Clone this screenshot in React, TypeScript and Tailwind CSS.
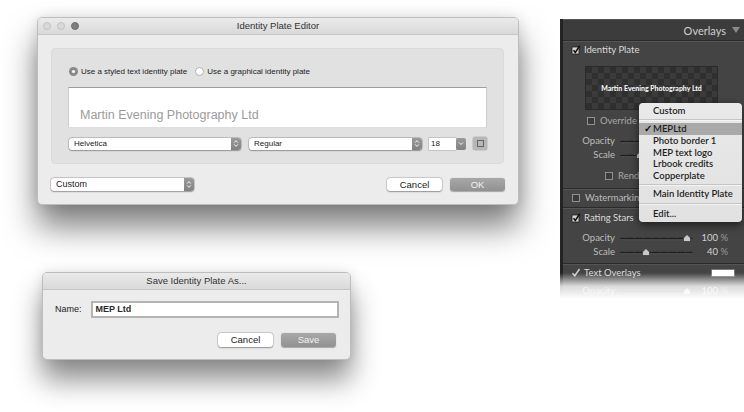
import React from "react";

const SF = "font-['Liberation_Sans',Arial,sans-serif]";
const LR = "font-['Lato','Liberation_Sans',sans-serif]";

function UpDown() {
  return (
    <div className="flex w-[10px] items-center justify-center rounded-r-[3px] bg-linear-to-b from-[#9a9a9a] to-[#828282]">
      <svg width="6" height="9" viewBox="0 0 6 9">
        <path d="M1.2 3.6 3 1.6 4.8 3.6M1.2 5.4 3 7.4 4.8 5.4" stroke="white" strokeWidth="0.9" fill="none" />
      </svg>
    </div>
  );
}

function Select({ label, className, textClass }: { label: string; className: string; textClass: string }) {
  return (
    <div className={`flex items-stretch rounded-[3px] bg-white shadow-[0_0_0_0.5px_rgba(0,0,0,0.25),0_0.5px_1.5px_rgba(0,0,0,0.25)] ${className}`}>
      <div className={`flex flex-1 items-center pl-[5px] leading-none text-[#222] ${textClass}`}>{label}</div>
      <UpDown />
    </div>
  );
}

function MacButton({ label, primary, className }: { label: string; primary?: boolean; className: string }) {
  return primary ? (
    <div className={`flex items-center justify-center rounded-[3px] bg-linear-to-b from-[#a8a8a8] to-[#919191] text-[9.5px] leading-none text-[#f2f2f2] shadow-[0_0.5px_1px_rgba(0,0,0,0.3)] ${className}`}>
      {label}
    </div>
  ) : (
    <div className={`flex items-center justify-center rounded-[3px] bg-white text-[9.5px] leading-none text-[#222] shadow-[0_0_0_0.5px_rgba(0,0,0,0.2),0_0.5px_1.5px_rgba(0,0,0,0.3)] ${className}`}>
      {label}
    </div>
  );
}

function TitleBar({ title, lights }: { title: string; lights?: boolean }) {
  return (
    <div className="relative flex h-[17px] items-center justify-center border-b border-[#c6c6c6] bg-linear-to-b from-[#ebebeb] to-[#d9d9d9]">
      {lights && (
        <div className="absolute left-[5px] top-[4px] flex gap-[6px]">
          <div className="h-[8px] w-[8px] rounded-full border border-[#c2c2c2] bg-[#d9d9d9]" />
          <div className="h-[8px] w-[8px] rounded-full border border-[#c2c2c2] bg-[#d9d9d9]" />
          <div className="h-[8px] w-[8px] rounded-full border border-[#707070] bg-[#7e7e7e]" />
        </div>
      )}
      <span className="text-[9.5px] leading-none text-[#333]">{title}</span>
    </div>
  );
}

function LRCheck({ checked }: { checked?: boolean }) {
  return checked ? (
    <svg width="10" height="10" viewBox="0 0 10 10" className="shrink-0">
      <rect x="1" y="2" width="7" height="7" fill="#d6d6d6" stroke="#1e1e1e" strokeWidth="0.8" />
      <path d="M2.5 5.2 4.3 7.4 8.8 0.8" stroke="#111" strokeWidth="1.6" fill="none" />
    </svg>
  ) : (
    <svg width="10" height="10" viewBox="0 0 10 10" className="shrink-0">
      <rect x="1.5" y="1.5" width="7" height="7" fill="#3a3a3a" stroke="#9a9a9a" strokeWidth="0.9" />
    </svg>
  );
}

function Slider({ width, thumb }: { width: number; thumb: number }) {
  const ticks = [];
  for (let x = 6; x < width - 3; x += 8.5) ticks.push(x);
  return (
    <svg width={width} height="10" viewBox={`0 0 ${width} 10`} className="shrink-0">
      <line x1="1" y1="5.5" x2={width - 1} y2="5.5" stroke="#1f1f1f" strokeWidth="1.4" strokeLinecap="round" />
      <line x1="1" y1="6.8" x2={width - 1} y2="6.8" stroke="#5e5e5e" strokeWidth="0.6" />
      {ticks.map((t) => (
        <line key={t} x1={t} y1="4" x2={t} y2="5" stroke="#6a6a6a" strokeWidth="0.6" />
      ))}
      <path d={`M${thumb - 3.5} 8.5 L${thumb - 3.5} 5 L${thumb} 1.5 L${thumb + 3.5} 5 L${thumb + 3.5} 8.5 Z`} fill="#c9c9c9" stroke="#222" strokeWidth="0.6" />
    </svg>
  );
}

function Separator() {
  return (
    <div className="flex flex-col">
      <div className="h-px bg-[#2a2a2a]" />
      <div className="h-px bg-[#555]" />
    </div>
  );
}

function SliderRow({ label, width, thumb, value, className }: { label: string; width: number; thumb: number; value?: string; className: string }) {
  return (
    <div className={`flex items-center leading-none ${className}`}>
      <div className="w-[52px] text-right text-[#bdbdbd]">{label}</div>
      <div className="ml-[5px] flex">
        <Slider width={width} thumb={thumb} />
      </div>
      {value && (
        <div className="ml-auto mr-[16px] text-[#d2d2d2]">
          {value} <span className="text-[#9a9a9a]">%</span>
        </div>
      )}
    </div>
  );
}

function MenuItem({ label, checked, className }: { label: string; checked?: boolean; className: string }) {
  return (
    <div className={`flex items-center leading-none ${checked ? "bg-[#a9a9a9]" : ""} ${className}`}>
      <span className="w-[14px] pl-[5px] text-[#111]">{checked ? "✓" : ""}</span>
      <span>{label}</span>
    </div>
  );
}

function MenuSep({ className }: { className: string }) {
  return (
    <div className={`flex flex-col justify-center ${className}`}>
      <div className="h-px bg-[#c4c4c4]" />
      <div className="h-px bg-[#f4f4f4]" />
    </div>
  );
}

export default function App() {
  return (
    <div className={`relative h-[412px] w-[744px] overflow-hidden bg-white ${SF}`}>
      {/* Identity Plate Editor */}
      <div className="absolute left-[37px] top-[17px] flex h-[188px] w-[482px] flex-col overflow-hidden rounded-[5px] border border-[#bdbdbd] bg-[#ececec] shadow-[0_22px_32px_rgba(0,0,0,0.5),0_0_14px_rgba(0,0,0,0.12)]">
        <TitleBar title="Identity Plate Editor" lights />
        <div className="ml-[13px] mt-[13px] flex h-[116px] w-[453px] flex-col rounded-[4px] border border-[#dadada] bg-[#e1e1e1] px-[16px]">
          <div className="mt-[18px] flex items-center text-[8px] leading-none text-[#222]">
            <div className="ml-[1px] flex h-[9px] w-[9px] items-center justify-center rounded-full bg-[#8a8a8a]">
              <div className="h-[3px] w-[3px] rounded-full bg-white" />
            </div>
            <span className="ml-[3px]">Use a styled text identity plate</span>
            <div className="ml-[8px] h-[9px] w-[9px] rounded-full border border-[#b2b2b2] bg-white" />
            <span className="ml-[3px]">Use a graphical identity plate</span>
          </div>
          <div className="mt-[11px] flex h-[41px] w-[419px] items-center border-x border-b border-t border-x-[#cdcdcd] border-b-[#dedede] border-t-[#9e9e9e] bg-white pl-[11px] pt-[16px]">
            <span className="text-[12.5px] leading-none text-[#9b9b9b]">Martin Evening Photography Ltd</span>
          </div>
          <div className="mt-[9px] flex items-center">
            <Select label="Helvetica" className="ml-[1px] h-[12px] w-[172px]" textClass="text-[8px]" />
            <Select label="Regular" className="ml-[8px] h-[12px] w-[173px]" textClass="text-[8px]" />
            <div className="ml-[7px] flex h-[12px] w-[37px] items-stretch">
              <div className="flex flex-1 items-center bg-white pl-[2px] text-[8px] leading-none text-[#222] shadow-[0_0_0_0.5px_rgba(0,0,0,0.25)]">18</div>
              <div className="flex w-[10px] items-center justify-center rounded-[2px] bg-linear-to-b from-[#9a9a9a] to-[#828282]">
                <svg width="6" height="5" viewBox="0 0 6 5">
                  <path d="M1 1.5 3 3.5 5 1.5" stroke="white" strokeWidth="0.9" fill="none" />
                </svg>
              </div>
            </div>
            <div className="ml-[7px] flex h-[13px] w-[14px] items-center justify-center rounded-[2px] bg-[#b7b7b7] shadow-[0_0_0_0.5px_rgba(0,0,0,0.2)]">
              <div className="h-[7px] w-[7px] border border-[#666]" />
            </div>
          </div>
        </div>
        <div className="mx-[13px] mt-[14px] flex items-center">
          <Select label="Custom" className="h-[13px] w-[143px]" textClass="text-[9px]" />
          <MacButton label="Cancel" className="ml-auto h-[13px] w-[55px]" />
          <MacButton label="OK" primary className="ml-[8px] h-[13px] w-[55px]" />
        </div>
      </div>

      {/* Save Identity Plate As */}
      <div className="absolute left-[42px] top-[272px] flex h-[88px] w-[309px] flex-col overflow-hidden rounded-[5px] border border-[#bdbdbd] bg-[#ececec] shadow-[0_20px_28px_rgba(0,0,0,0.45),0_0_12px_rgba(0,0,0,0.1)]">
        <TitleBar title="Save Identity Plate As..." />
        <div className="ml-[12px] mt-[11px] flex items-center">
          <span className="text-[9px] text-[#222]">Name:</span>
          <div className="ml-[9px] flex h-[17px] w-[248px] items-center border-2 border-[#b4b4b4] bg-white pl-[3px]">
            <span className="text-[9px] font-bold leading-none text-[#2a2a2a]">MEP Ltd</span>
          </div>
        </div>
        <div className="mr-[14px] mt-[15px] flex justify-end">
          <MacButton label="Cancel" className="h-[14px] w-[55px]" />
          <MacButton label="Save" primary className="ml-[8px] h-[14px] w-[55px]" />
        </div>
      </div>

      {/* Lightroom Overlays panel */}
      <div className={`absolute left-[560px] top-[19px] h-[280px] w-[184px] overflow-hidden bg-[#242424] pl-[3px] ${LR}`}>
        <div className="flex h-full flex-col bg-[#444] text-[9.5px] leading-none">
          <div className="flex h-[21px] shrink-0 items-center justify-end border-t border-[#575757] bg-[#3c3c3c] pr-[3px]">
            <span className="text-[11px] text-[#cfcfcf]">Overlays</span>
            <svg width="10" height="8" viewBox="0 0 10 8" className="ml-[5px]">
              <path d="M1 1 H9 L5 7 Z" fill="#8a8a8a" />
            </svg>
          </div>
          <Separator />
          <div className="mt-[1px] flex h-[13px] shrink-0 items-center pl-[8px]">
            <LRCheck checked />
            <span className="ml-[3px] text-[#dadada]">Identity Plate</span>
          </div>
          <div className="ml-[22px] mt-[10px] flex h-[44px] w-[133px] shrink-0 items-center justify-center border border-[#2a2a2a] bg-[conic-gradient(#3b3b3b_25%,#2f2f2f_0_50%,#3b3b3b_0_75%,#2f2f2f_0)] bg-[length:12px_12px]">
            <span className="text-[7px] font-bold text-white">Martin Evening Photography Ltd</span>
          </div>
          <div className="mt-[4px] flex h-[14px] shrink-0 items-center pl-[23px]">
            <LRCheck />
            <span className="ml-[4px] text-[#a8a8a8]">Override Color</span>
          </div>
          <div className="mt-[6px]" />
          <SliderRow label="Opacity" width={80} thumb={74} className="h-[14px] shrink-0" />
          <SliderRow label="Scale" width={80} thumb={20} className="h-[14px] shrink-0" />
          <div className="mt-[7px] flex h-[14px] shrink-0 items-center pl-[41px]">
            <LRCheck />
            <span className="ml-[4px] text-[#a8a8a8]">Render behind image</span>
          </div>
          <div className="mt-[5px]">
            <Separator />
          </div>
          <div className="flex h-[15px] shrink-0 items-center pl-[8px]">
            <LRCheck />
            <span className="ml-[4px] text-[#bdbdbd]">Watermarking:</span>
          </div>
          <div className="mt-[2px]">
            <Separator />
          </div>
          <div className="mt-[2px] flex h-[14px] shrink-0 items-center pl-[8px]">
            <LRCheck checked />
            <span className="ml-[3px] text-[#dadada]">Rating Stars</span>
          </div>
          <div className="mt-[6px]" />
          <SliderRow label="Opacity" width={73} thumb={67} value="100" className="h-[14px] shrink-0" />
          <SliderRow label="Scale" width={73} thumb={26} value="40" className="h-[14px] shrink-0" />
          <div className="mt-[4px]">
            <Separator />
          </div>
          <div className="mt-[1px] flex h-[14px] shrink-0 items-center pl-[8px]">
            <svg width="10" height="10" viewBox="0 0 10 10" className="shrink-0">
              <path d="M1.5 5.2 3.8 7.8 8.5 1" stroke="#cfcfcf" strokeWidth="1.5" fill="none" />
            </svg>
            <span className="ml-[3px] text-[#dadada]">Text Overlays</span>
            <div className="ml-auto mr-[9px] h-[8px] w-[24px] rounded-[1px] border border-[#777] bg-white" />
          </div>
          <div className="mt-[4px]" />
          <SliderRow label="Opacity" width={73} thumb={67} value="100" className="h-[14px] shrink-0" />
        </div>
        <div className="absolute bottom-0 left-0 h-[26px] w-full bg-linear-to-b from-[rgba(255,255,255,0)] via-[rgba(255,255,255,0.8)] to-white" />
      </div>

      {/* Popup menu */}
      <div className={`absolute left-[639px] top-[103px] flex w-[103px] flex-col rounded-[4px] bg-linear-to-b from-[#e9e9e9] to-[#e1e1e1] py-[2px] text-[9.5px] font-semibold text-[#1e1e1e] shadow-[0_3px_8px_rgba(0,0,0,0.55)] ${LR}`}>
        <MenuItem label="Custom" className="h-[12px]" />
        <MenuSep className="h-[6px]" />
        <MenuItem label="MEPLtd" checked className="h-[12px]" />
        <MenuItem label="Photo border 1" className="h-[11.5px]" />
        <MenuItem label="MEP text logo" className="h-[11.5px]" />
        <MenuItem label="Lrbook credits" className="h-[11.5px]" />
        <MenuItem label="Copperplate" className="h-[11.5px]" />
        <MenuSep className="h-[7px]" />
        <MenuItem label="Main Identity Plate" className="h-[12px]" />
        <MenuSep className="h-[8px]" />
        <MenuItem label="Edit..." className="h-[12px]" />
      </div>
    </div>
  );
}
